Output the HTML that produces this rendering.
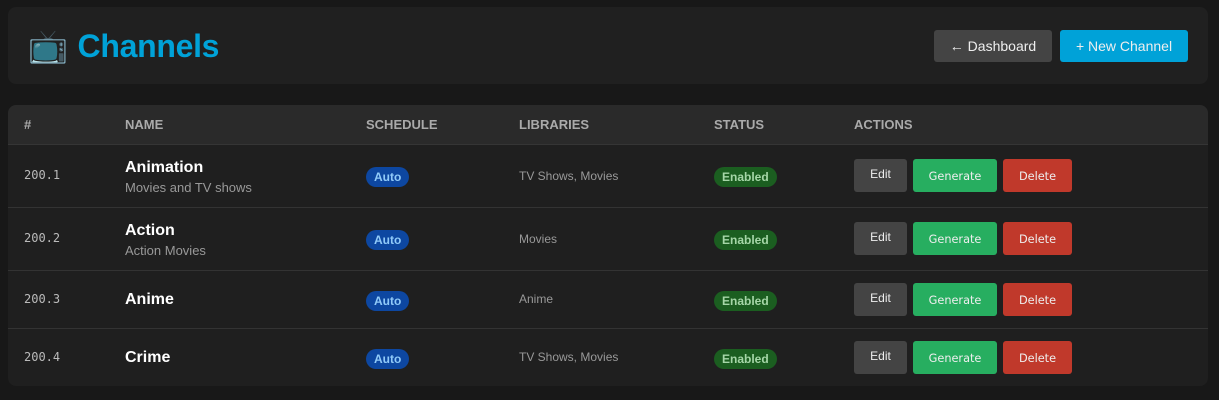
<!DOCTYPE html>
<html><head><style>
body{margin:0;background:#181818;font-family:"Liberation Sans",sans-serif;width:1219px;height:400px;overflow:hidden;position:relative}
.hdr{position:absolute;left:8px;top:7px;width:1200px;height:77px;background:#202020;border-radius:8px}
.title{position:absolute;left:20px;top:20px;font-size:32px;font-weight:bold;color:#00a2d8;display:flex;align-items:center;letter-spacing:-0.3px}
.btn{position:absolute;top:23px;height:32px;border-radius:3px;color:#eee;font-size:14px;line-height:32px;text-align:center}
.card{position:absolute;left:8px;top:105px;width:1200px;height:281px;background:#1f1f1f;border-radius:8px;overflow:hidden}
.th{position:absolute;top:0;left:0;width:1200px;height:39px;background:#2a2a2a;border-bottom:1px solid #353535}
.th span{position:absolute;top:12px;font-size:13px;font-weight:bold;color:#aaa}
.row{position:absolute;left:0;width:1200px;border-bottom:1px solid #333}
.row>*{position:absolute}
.num{left:16px;font-family:"DejaVu Sans Mono",monospace;font-size:12px;color:#bbb}
.nm{left:117px;font-size:16px;font-weight:bold;color:#fff}
.sub{left:117px;font-size:13px;color:#999}
.auto{left:358px;background:#0d47a1;color:#90caf9;font-size:12px;font-weight:bold;border-radius:10px;padding:0 8px;height:20px;line-height:20px}
.lib{left:511px;font-size:12px;color:#999}
.en{left:706px;background:#1b5e20;color:#a5d6a7;font-size:12px;font-weight:bold;border-radius:10px;padding:0 8px;height:20px;line-height:20px}
.b{height:33px;line-height:31px;border-radius:3px;color:#eee;font-size:12px;text-align:center}
.e{left:846px;width:53px;background:#444}
.g{left:905px;width:84px;background:#27ae60;font-family:"DejaVu Sans",sans-serif;font-size:11.3px;line-height:35px}
.d{left:995px;width:69px;background:#c0392b;font-family:"DejaVu Sans",sans-serif;font-size:11.3px;line-height:35px}
</style></head><body>
<div class="hdr">
<div class="title"><span style="font-size:32px;margin-right:10px">📺</span>Channels</div>
<div class="btn" style="left:926px;width:118px;background:#444">← Dashboard</div>
<div class="btn" style="left:1052px;width:128px;background:#00a2d8">+ New Channel</div>
</div>
<div class="card">
<div class="th"><span style="left:16px">#</span><span style="left:117px">NAME</span><span style="left:358px">SCHEDULE</span><span style="left:511px">LIBRARIES</span><span style="left:706px">STATUS</span><span style="left:846px">ACTIONS</span></div>
<div class="row" style="top:40px;height:62px">
<span class="num" style="top:23px">200.1</span><span class="nm" style="top:14px">Animation</span><span class="sub" style="top:35px">Movies and TV shows</span>
<span class="auto" style="top:22px">Auto</span><span class="lib" style="top:24px">TV Shows, Movies</span><span class="en" style="top:22px">Enabled</span>
<span class="b e" style="top:14px">Edit</span><span class="b g" style="top:14px">Generate</span><span class="b d" style="top:14px">Delete</span></div>
<div class="row" style="top:103px;height:62px">
<span class="num" style="top:23px">200.2</span><span class="nm" style="top:14px">Action</span><span class="sub" style="top:35px">Action Movies</span>
<span class="auto" style="top:22px">Auto</span><span class="lib" style="top:24px">Movies</span><span class="en" style="top:22px">Enabled</span>
<span class="b e" style="top:14px">Edit</span><span class="b g" style="top:14px">Generate</span><span class="b d" style="top:14px">Delete</span></div>
<div class="row" style="top:166px;height:57px">
<span class="num" style="top:21px">200.3</span><span class="nm" style="top:20px">Anime</span>
<span class="auto" style="top:20px">Auto</span><span class="lib" style="top:21px">Anime</span><span class="en" style="top:20px">Enabled</span>
<span class="b e" style="top:12px">Edit</span><span class="b g" style="top:12px">Generate</span><span class="b d" style="top:12px">Delete</span></div>
<div class="row" style="top:224px;height:57px;border:0">
<span class="num" style="top:21px">200.4</span><span class="nm" style="top:20px">Crime</span>
<span class="auto" style="top:20px">Auto</span><span class="lib" style="top:21px">TV Shows, Movies</span><span class="en" style="top:20px">Enabled</span>
<span class="b e" style="top:12px">Edit</span><span class="b g" style="top:12px">Generate</span><span class="b d" style="top:12px">Delete</span></div>
</div>
</body></html>
